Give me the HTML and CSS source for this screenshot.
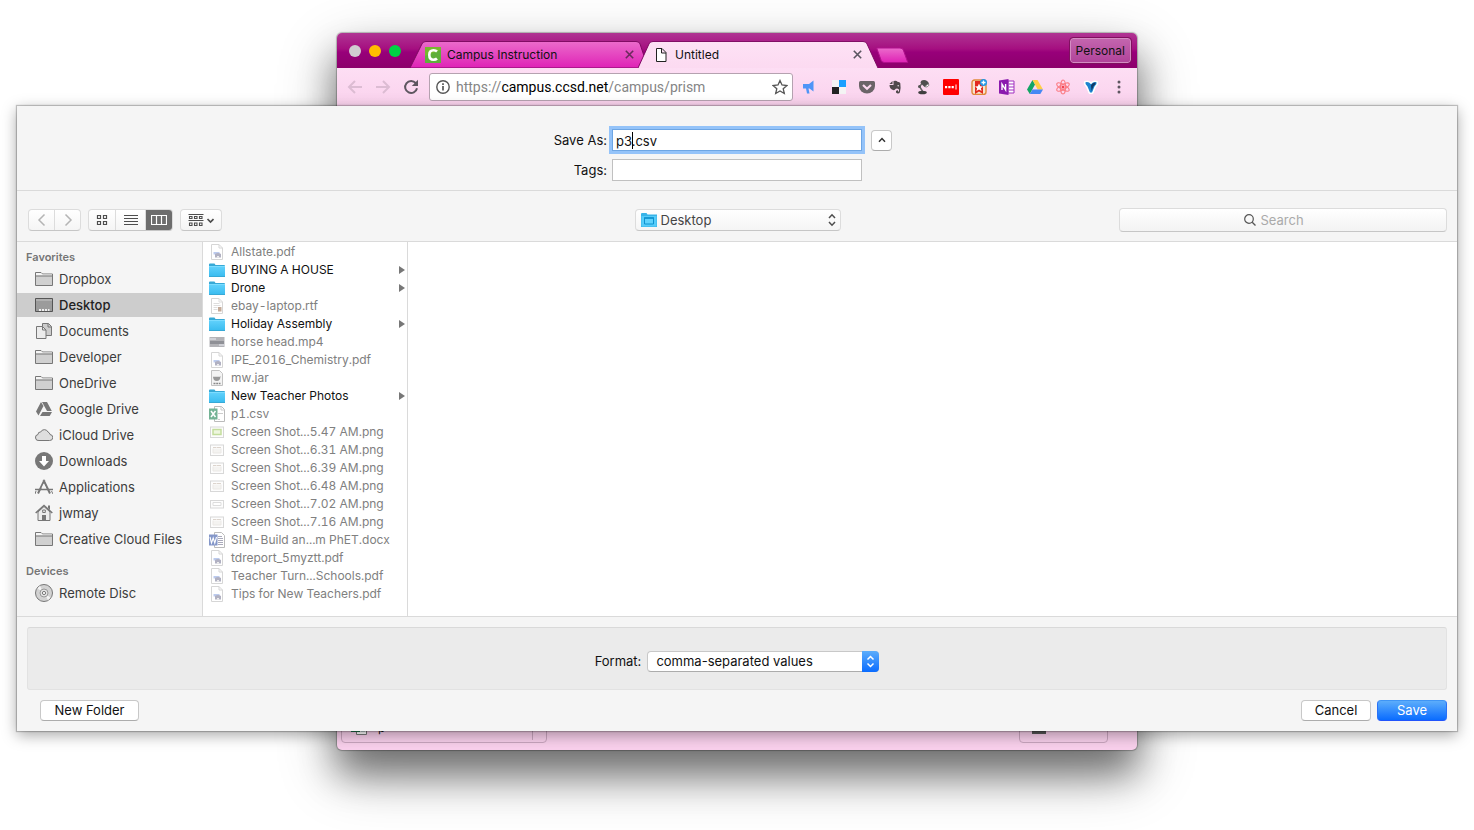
FILE: index.html
```
<!DOCTYPE html>
<html lang="en">
<head>
<meta charset="utf-8">
<title>Save As</title>
<link rel="stylesheet" href="styles.css">
</head>
<body>
<svg class="defs" aria-hidden="true">
  <linearGradient id="gFolder" x1="0" y1="0" x2="0" y2="1"><stop offset="0" stop-color="#5fd0fb"/><stop offset="1" stop-color="#3cbdf0"/></linearGradient>
  <linearGradient id="gTab" x1="0" y1="0" x2="0" y2="1"><stop offset="0" stop-color="#eb6bcb"/><stop offset="1" stop-color="#df22b6"/></linearGradient>
  <linearGradient id="gTabOn" x1="0" y1="0" x2="0" y2="1"><stop offset="0" stop-color="#fde2f5"/><stop offset="1" stop-color="#fcdaf1"/></linearGradient>
  <symbol id="side-folder" viewBox="0 0 18 16"><path d="M.5 14.500V1.500h5.500l1.500 1.500h10v11.500z" fill="#d0d0d0" stroke="#777"/><path d="M1 2h5l1.500 1.500H17V4.500H1z" fill="#f5f5f5"/><path d="M1 5h16" stroke="#777"/></symbol>
  <symbol id="folder" viewBox="0 0 16 14"><path d="M0 1.500Q0 .5 1 .5h4.500l1 1.500H15q1 0 1 1V14H0z" fill="#37a9d6"/><path d="M0 4h16v9H0z" fill="url(#gFolder)"/><path d="M0 3.500h16" stroke="#7cdcff"/></symbol>
  <symbol id="pdf" viewBox="0 0 16 16"><path d="M2.500.5h7.500l3.500 3.500v11.500h-11z" fill="#fff" stroke="#d6d6d6"/><path d="M10 .5V4h3.500" fill="none" stroke="#d6d6d6"/><path d="M4.500 8h6v2.500h-6z" fill="#bccbee"/><path d="M6 10q3-2 6 0v3.500H6z" fill="#b1b1c2"/><path d="M8 12h2v1.500H8z" fill="#eee"/></symbol>
  <symbol id="rtf" viewBox="0 0 16 16"><path d="M2.500.5h7.500l3.500 3.500v11.500h-11z" fill="#fff" stroke="#d6d6d6"/><path d="M10 .5V4h3.500M4.500 5.500h6M4.500 7.500h7M4.500 9.500h4M4.500 11.500h4" fill="none" stroke="#dedede"/><path d="M9 9h3.500v4.500H9z" fill="#c4ab99"/></symbol>
  <symbol id="png" viewBox="0 0 16 16"><rect x="1.500" y="3" width="13" height="10.500" fill="#fdfdfd" stroke="#d8d8d8"/><path d="M4 5.500h3.500M8 5.500h4" stroke="#dcd4cd"/><path d="M4 6.500v4.500h8V6.500" fill="#f4f3f1" stroke="#ebe8e5"/></symbol>
</svg>

<main class="desktop">
  <section class="browser" aria-label="Browser window">
    <header class="titlebar">
      <div class="lights"><i class="light grey"></i><i class="light amber"></i><i class="light green"></i></div>
      <div class="tabs">
        <div class="tab">
          <svg class="tab-shape" viewBox="0 0 238 28" preserveAspectRatio="none"><path d="M0 28L12 3Q13 .5 16 .5H226Q229 .5 230 3L238 28z" fill="url(#gTab)" stroke="#7d0a62"/></svg>
          <svg class="i16" viewBox="0 0 16 16"><rect width="16" height="16" fill="#76b82e"/><path d="M0 16V9L16 3v13z" fill="#5faf3c"/><path d="M12 4.500Q10.800 3.300 8.500 3.300 4.300 3.300 4.300 8t4.200 4.700Q10.800 12.700 12 11.500" fill="none" stroke="#fff" stroke-width="2.600"/></svg>
          <span class="tab-title">Campus Instruction</span>
          <button class="x" aria-label="Close Campus Instruction"><svg viewBox="0 0 9 9"><path d="M.8.8l7.400 7.400M8.200.8L.8 8.200" stroke="#6a2a5b" stroke-width="1.600"/></svg></button>
        </div>
        <div class="tab on">
          <svg class="tab-shape" viewBox="0 0 240 28" preserveAspectRatio="none"><path d="M0 28L11 3Q12 .5 15 .5H225Q228 .5 229 3L240 28" fill="url(#gTabOn)" stroke="#7d0a62"/></svg>
          <svg class="i16" viewBox="0 0 16 16"><path d="M3.500 1.500h5.500l4 4v9h-9.500zM8.500 1.500V6H13" fill="#fff" stroke="#222"/></svg>
          <span class="tab-title">Untitled</span>
          <button class="x" aria-label="Close Untitled"><svg viewBox="0 0 9 9"><path d="M.8.8l7.400 7.400M8.200.8L.8 8.200" stroke="#5a5560" stroke-width="1.600"/></svg></button>
        </div>
        <button class="newtab" aria-label="New tab"><svg viewBox="0 0 34 17"><path d="M.7 1H24q2.500 0 3.300 2l4.500 12.500H8.500q-2.500 0-3.300-2z" fill="url(#gTab)" stroke="#b0108c"/></svg></button>
      </div>
      <button class="profile">Personal</button>
    </header>
    <nav class="navbar">
      <div class="navbtns">
        <button class="ic" aria-label="Back"><svg viewBox="0 0 16 16"><path d="M15 8H2M8 2L2 8l6 6" fill="none" stroke="#dcbcd3" stroke-width="2"/></svg></button>
        <button class="ic" aria-label="Forward"><svg viewBox="0 0 16 16"><path d="M1 8h13M8 2l6 6-6 6" fill="none" stroke="#dcbcd3" stroke-width="2"/></svg></button>
        <button class="ic" aria-label="Reload"><svg viewBox="0 0 16 16"><path d="M12.800 4.200A6 6 0 1 0 14 9.200" fill="none" stroke="#5e5660" stroke-width="2"/><path d="M15 .8V7H8.800z" fill="#5e5660"/></svg></button>
      </div>
      <div class="omnibox">
        <svg class="i16" viewBox="0 0 16 16"><circle cx="8" cy="8" r="6.200" fill="none" stroke="#555" stroke-width="1.400"/><path d="M8 7v4.500M8 4.300v1.600" stroke="#555" stroke-width="1.700"/></svg>
        <a class="url" href="#">https://<b>campus.ccsd.net</b>/campus/prism</a>
        <svg class="i16" viewBox="0 0 16 16"><path d="M8 1.500l2 4.500 4.900.5-3.700 3.200 1.100 4.800L8 12l-4.300 2.500 1.100-4.800L1.100 6.500 6 6z" fill="none" stroke="#555" stroke-width="1.300"/></svg>
      </div>
      <div class="exts">
        <button aria-label="Announcements"><svg viewBox="0 0 16 16"><path d="M10.500 1.500v11L6.500 9.500H5.500l1 5H4L3 9.500H0V5h6z" fill="#4f95f7"/></svg></button>
        <button aria-label="Delicious"><svg viewBox="0 0 16 16"><rect x="1" y="1" width="14" height="14" fill="#f4f4f4"/><path d="M8 1h7v7H8z" fill="#1a9fff"/><path d="M1 8h7v7H1z" fill="#222"/></svg></button>
        <button aria-label="Pocket"><svg viewBox="0 0 16 16"><path d="M1.500 2h13q1.500 0 1.500 1.500V7a8 7.500 0 0 1-16 0V3.500Q0 2 1.500 2z" fill="#6b6468"/><path d="M4 6l4 3.800L12 6" fill="none" stroke="#fcd9f0" stroke-width="2.200"/></svg></button>
        <button aria-label="Evernote"><svg viewBox="0 0 16 16"><path d="M5.500 2v3H2.500zM6.500 2q3-1 4 .8 2.500 0 2.800 1.500.8 5-.4 9Q12.500 14.500 11 14.500q-2.500-.3-2-2.300.5-1 2-.8v1h1V10.500q-1.500-1-2-1Q8.500 9.500 8.500 10q-.5 1.500-2.500 1Q2.500 10 2.500 6h4z" fill="#4f484b"/><circle cx="11.200" cy="6.700" r=".8" fill="#ddd"/></svg></button>
        <button aria-label="Lamp"><svg viewBox="0 0 16 16"><path d="M8 3.500L4.500 7.500 8 13" fill="none" stroke="#666" stroke-width="1.500"/><path d="M5.500 4q0-3 3.500-3 3.500 0 5 3.500L9.500 8z" fill="#4f4f4f"/><path d="M9.800 7.500L13.500 4.500q1 2-.8 3-1.700 1-2.900 0z" fill="#fff" stroke="#666" stroke-width=".8"/><ellipse cx="7.500" cy="13.500" rx="4.300" ry="1.800" fill="#3f3f3f"/><circle cx="4.500" cy="7.500" r="1.500" fill="#555"/></svg></button>
        <button aria-label="Passwords"><svg viewBox="0 0 16 16"><rect width="16" height="16" rx="1" fill="#f00"/><path d="M2 7h2.200v2.200H2zM5.300 7h2.200v2.200H5.300zM8.600 7h2.200v2.200H8.600zM12.500 5.500h1v5h-1z" fill="#fff"/></svg></button>
        <button aria-label="Bookmarks"><svg viewBox="0 0 16 16"><rect x="1" y="1" width="14" height="14.500" rx="2.500" fill="#f7e3cd" stroke="#e08a3a" stroke-width="1.400"/><path d="M4 2h8v13l-4-2.500L4 15z" fill="#e3291e"/><path d="M8 4.500l1.200 2.700 2.800.2-2.200 1.900.8 2.800L8 10.500l-2.600 1.600.8-2.800L4 7.400l2.800-.2z" fill="#fff"/><circle cx="12.500" cy="3.500" r="3.500" fill="#2196e8"/><path d="M12.500 1.500v4M10.500 3.500h4" stroke="#fff" stroke-width="1.300"/></svg></button>
        <button aria-label="OneNote"><svg viewBox="0 0 16 16"><path d="M9 2h6v12H9z" fill="#fff" stroke="#a12fc0"/><path d="M10 5h5M10 8h5M10 11h5" stroke="#a12fc0"/><path d="M0 1.500L9.500 0v16L0 14.500z" fill="#8b1aae"/><path d="M3 11V5.200l3.600 5.600V5" fill="none" stroke="#fff" stroke-width="1.400"/></svg></button>
        <button aria-label="Google Drive"><svg viewBox="0 0 16 16"><path d="M5.500 1L0 10.500 2.800 15 8 5.500z" fill="#13a564"/><path d="M5.500 1h5L16 10.500h-5.300z" fill="#ffce43"/><path d="M5.500 10.500H16L13.300 15H2.800z" fill="#4688f4"/></svg></button>
        <button aria-label="Atom"><svg viewBox="0 0 16 16"><g fill="none" stroke="#fb7b83" stroke-width="1.100"><ellipse cx="8" cy="8" rx="2.500" ry="7"/><ellipse cx="8" cy="8" rx="2.500" ry="7" transform="rotate(60 8 8)"/><ellipse cx="8" cy="8" rx="2.500" ry="7" transform="rotate(120 8 8)"/></g><circle cx="8" cy="8" r="1.500" fill="#f4444f"/></svg></button>
        <button aria-label="Vector"><svg viewBox="0 0 16 16"><path d="M1.500 2.500q3.500-1.500 6.500 1 3-2.500 6.500-1 1.500 2.500-2 5.500L9.800 14.500H6.200L3.500 8Q0 5 1.500 2.500z" fill="#fff" stroke="#fff"/><path d="M2.500 3.200q3-1 5.500 2 2.500-3 5.500-2 .8 2-2 4.200L9 13.500H7L4.500 7.400Q1.700 5.200 2.500 3.200z" fill="#1c84cf"/><path d="M8 6.500q1.500-3 4.500-3 .5 1.500-1.800 3.500L8.500 12z" fill="#123a66"/></svg></button>
        <button aria-label="Menu"><svg viewBox="0 0 16 16"><circle cx="8" cy="3" r="1.500" fill="#5e5660"/><circle cx="8" cy="8" r="1.500" fill="#5e5660"/><circle cx="8" cy="13" r="1.500" fill="#5e5660"/></svg></button>
      </div>
    </nav>
    <div class="page"></div>
    <footer class="shelf">
      <div class="download"><svg class="i16" viewBox="0 0 16 16"><path d="M5.500.5h10v14h-10z" fill="#fff" stroke="#777"/><path d="M0 3h9v9H0z" fill="#1e7b52"/><path d="M10 8h4M10 11h4" stroke="#9bb"/></svg><span>p</span><i class="split"></i></div>
      <div class="showall"><i class="bar"></i></div>
    </footer>
  </section>

  <form class="dialog" aria-label="Save As">
    <div class="naming">
      <label for="name">Save As:</label>
      <div class="namebox"><input id="name" class="field focus" type="text" value="p3.csv"><i class="caret"></i></div>
      <button type="button" class="push collapse" aria-label="Collapse"><svg viewBox="0 0 8 6"><path d="M1 4.700L4 1.500l3 3.200" fill="none" stroke="#333" stroke-width="1.500"/></svg></button>
      <label for="tags">Tags:</label>
      <input id="tags" class="field" type="text">
    </div>

    <div class="toolbar">
      <div class="tools">
        <div class="seg history">
          <button type="button" aria-label="Back"><svg viewBox="0 0 16 16"><path d="M10.500 2.500L5 8l5.500 5.500" fill="none" stroke="#b4b4b4" stroke-width="1.500"/></svg></button>
          <button type="button" aria-label="Forward"><svg viewBox="0 0 16 16"><path d="M5.500 2.500L11 8l-5.500 5.500" fill="none" stroke="#b4b4b4" stroke-width="1.500"/></svg></button>
        </div>
        <div class="seg views">
          <button type="button" aria-label="Icons"><svg viewBox="0 0 16 16"><path d="M3.500 3.500h3v3h-3zM9.500 3.500h3v3h-3zM3.500 9.500h3v3h-3zM9.500 9.500h3v3h-3z" fill="none" stroke="#4d4d4d" stroke-width="1.200"/></svg></button>
          <button type="button" aria-label="List"><svg viewBox="0 0 16 16"><path d="M1 3.500h14M1 6.500h14M1 9.500h14M1 12.500h14" stroke="#4d4d4d"/></svg></button>
          <button type="button" class="active" aria-label="Columns"><svg viewBox="0 0 16 16"><path d="M.5 3.500h15v9H.5zM5.500 3v10M10.500 3v10" fill="none" stroke="#fff" stroke-width="1.200"/></svg></button>
        </div>
        <div class="seg arrange"><button type="button" aria-label="Arrange"><svg viewBox="0 0 26 16"><path d="M.5 2.500h15M.5 8.500h15" stroke="#4d4d4d"/><path d="M1.500 4.500h2.500v2H1.500zM6.500 4.500H9v2H6.500zM11.500 4.500H14v2h-2.500zM1.500 11H4v2.500H1.500zM6.500 11H9v2.500H6.500zM11.500 11H14v2.500h-2.500z" fill="none" stroke="#4d4d4d" stroke-width="1.100"/><path d="M19.500 7l3 3 3-3" fill="none" stroke="#4d4d4d" stroke-width="1.700"/></svg></button></div>
      </div>
      <div class="location">
        <svg class="i16" viewBox="0 0 16 14"><path d="M0 1q0-1 1-1h4.500l1 1.500H16V14H0z" fill="#38b4e8"/><path d="M.5 3h15v10.500H.5z" fill="#56ccf9"/><path d="M3.500 5h9v6h-9z" fill="#5fd2fc" stroke="#0e92cf"/><path d="M3 5h10" stroke="#0e92cf" stroke-width="1.500"/></svg>
        <select aria-label="Location"><option>Desktop</option></select>
        <svg class="updown" viewBox="0 0 8 14"><path d="M1 5l3-3.200L7 5M1 9l3 3.200L7 9" fill="none" stroke="#4d4d4d" stroke-width="1.500"/></svg>
      </div>
      <div class="search">
        <svg viewBox="0 0 12 12"><circle cx="5" cy="5" r="4.300" fill="none" stroke="#555" stroke-width="1.200"/><path d="M8.200 8.200l3.300 3.300" stroke="#555" stroke-width="1.300"/></svg>
        <input type="search" placeholder="Search" aria-label="Search">
      </div>
    </div>

    <div class="panes">
      <nav class="sidebar">
        <h2>Favorites</h2>
        <a href="#"><svg><use href="#side-folder"/></svg>Dropbox</a>
        <a href="#" class="current"><svg viewBox="0 0 18 16"><path d="M.5 1.500h17v13H.5z" fill="#9b9b9b" stroke="#555"/><path d="M1 3h16" stroke="#c5c5c5"/><path d="M4 12h2v2H4zM7 12h2v2H7zM10 12h2v2h-2zM13 12h1.500v2H13z" fill="#eee"/></svg>Desktop</a>
        <a href="#"><svg viewBox="0 0 18 18"><path d="M7.500 1.500h6l3 3v9h-9z" fill="#ccc" stroke="#777"/><path d="M13 1.500V5h3.500" fill="none" stroke="#777"/><path d="M1.500 4.500h6l3.500 3.500v8.500H1.500z" fill="#ececec" stroke="#777"/><path d="M7.500 4.500V8H11" fill="none" stroke="#777"/></svg>Documents</a>
        <a href="#"><svg><use href="#side-folder"/></svg>Developer</a>
        <a href="#"><svg><use href="#side-folder"/></svg>OneDrive</a>
        <a href="#"><svg viewBox="0 0 18 16"><path d="M6 1L1 10.500 3.500 14.500 8.500 5zM7 1h5l4.800 9H12zM7.500 11H17l-2.300 4H5z" fill="#777"/></svg>Google Drive</a>
        <a href="#"><svg viewBox="0 0 18 16"><path d="M4 13.500h10.500a3 3 0 0 0 .5-6 3.200 3.200 0 0 0-2-2.500 4 4 0 0 0-7.300 0 2.500 2.500 0 0 0-2.700 2.500A3 3 0 0 0 4 13.500z" fill="#dedede" stroke="#777"/></svg>iCloud Drive</a>
        <a href="#"><svg viewBox="0 0 18 18"><circle cx="9" cy="9" r="9" fill="#777"/><path d="M7 4h4v5h3l-5 5.500L4 9h3z" fill="#fff"/></svg>Downloads</a>
        <a href="#"><svg viewBox="0 0 18 16"><path d="M9.500 1L3 14.500M8.500 1L15 14.500" stroke="#777" stroke-width="2"/><path d="M0 10.500h18" stroke="#777" stroke-width="1.500"/><path d="M1 12l-1 3M16.500 12l1.500 3" stroke="#777"/><path d="M8.600 4.500L6.500 9h4.500z" fill="#f5f5f5"/></svg>Applications</a>
        <a href="#"><svg viewBox="0 0 18 18"><path d="M3 8l6-5.500L15 8v8.500H3z" fill="#ececec" stroke="#777"/><path d="M.7 9L9 1.500 17.300 9" fill="none" stroke="#777" stroke-width="1.600"/><path d="M13 1.500h2V6l-2-2z" fill="#777"/><path d="M7 11h4v6H7z" fill="#777"/><path d="M7.700 6h2.600v2.500H7.700z" fill="none" stroke="#777"/></svg>jwmay</a>
        <a href="#"><svg><use href="#side-folder"/></svg>Creative Cloud Files</a>
        <h2 class="later">Devices</h2>
        <a href="#"><svg viewBox="0 0 18 18"><circle cx="9" cy="9" r="8.500" fill="#d2d2d2" stroke="#777"/><path d="M9 9L2.500 4.500A8 8 0 0 1 5 2zM9 9l6.500 4.500A8 8 0 0 1 13 16z" fill="#f3f3f3"/><circle cx="9" cy="9" r="4" fill="#e3e3e3" stroke="#999"/><circle cx="9" cy="9" r="1.600" fill="#fff" stroke="#777"/></svg>Remote Disc</a>
      </nav>
      <ul class="files">
        <li><svg><use href="#pdf"/></svg>Allstate.pdf</li>
        <li class="dir"><svg><use href="#folder"/></svg>BUYING A HOUSE</li>
        <li class="dir"><svg><use href="#folder"/></svg>Drone</li>
        <li><svg><use href="#rtf"/></svg>ebay-laptop.rtf</li>
        <li class="dir"><svg><use href="#folder"/></svg>Holiday Assembly</li>
        <li><svg viewBox="0 0 16 16"><path d="M.5 3h15v10H.5z" fill="#b3b3b7"/><path d="M1 7h14v3H1z" fill="#8f9096"/><path d="M1 4h6v2H1zM10 10h5v2h-5z" fill="#cfd0d6"/></svg>horse head.mp4</li>
        <li><svg><use href="#pdf"/></svg>IPE_2016_Chemistry.pdf</li>
        <li><svg viewBox="0 0 16 16"><path d="M2.500.5h8l3 3v12h-11z" fill="#f4f4f4" stroke="#c2c2c2"/><path d="M4 6h7.500q0 5-3.800 5T4 6z" fill="#999"/><path d="M4 6.500h7.500" stroke="#ddd"/><path d="M4.500 13.500h7" stroke="#888" stroke-width="1.500" stroke-dasharray="2 .7"/></svg>mw.jar</li>
        <li class="dir"><svg><use href="#folder"/></svg>New Teacher Photos</li>
        <li><svg viewBox="0 0 16 16"><path d="M5.500.5h7l3 3v12h-10z" fill="#fff" stroke="#bbb"/><path d="M12 .5V4h3.500M9 7.500h5M9 13.500h2" fill="none" stroke="#ccc"/><path d="M0 2.500h8.500v11H0z" fill="#74b395"/><path d="M2 5l4.500 6M6.500 5L2 11" stroke="#fff" stroke-width="1.500"/></svg>p1.csv</li>
        <li><svg viewBox="0 0 16 16"><rect x="1.500" y="3" width="13" height="10.500" fill="#fdfdfd" stroke="#d8d8d8"/><path d="M4 5.500h8v5H4z" fill="#eef6df" stroke="#c3dd9d" stroke-width="1.500"/></svg>Screen Shot...5.47 AM.png</li>
        <li><svg><use href="#png"/></svg>Screen Shot...6.31 AM.png</li>
        <li><svg><use href="#png"/></svg>Screen Shot...6.39 AM.png</li>
        <li><svg><use href="#png"/></svg>Screen Shot...6.48 AM.png</li>
        <li><svg viewBox="0 0 16 16"><rect x="1.500" y="4.500" width="13" height="7.500" fill="#fdfdfd" stroke="#d8d8d8"/><path d="M4 6.500h8v3H4z" fill="#fff" stroke="#ddd"/></svg>Screen Shot...7.02 AM.png</li>
        <li><svg><use href="#png"/></svg>Screen Shot...7.16 AM.png</li>
        <li><svg viewBox="0 0 16 16"><path d="M5.500.5h7l3 3v12h-10z" fill="#fff" stroke="#bbb"/><path d="M9 4.500h4M9 6.500h5M9 8.500h5M9 10.500h5M9 12.500h5" stroke="#aab"/><path d="M0 2.500h8.500v11H0z" fill="#8497c9"/><path d="M1 5l1.500 6L4.200 6l1.600 5L7.500 5" fill="none" stroke="#fff" stroke-width="1.100"/></svg>SIM-Build an...m PhET.docx</li>
        <li><svg><use href="#pdf"/></svg>tdreport_5myztt.pdf</li>
        <li><svg><use href="#pdf"/></svg>Teacher Turn...Schools.pdf</li>
        <li><svg><use href="#pdf"/></svg>Tips for New Teachers.pdf</li>
      </ul>
      <div class="preview"></div>
    </div>

    <div class="accessory">
      <label for="format">Format:</label>
      <div class="format">
        <select id="format"><option>comma-separated values</option></select>
        <svg class="cap" viewBox="0 0 17 21"><path d="M5.500 8.500l3-3 3 3M5.500 12.500l3 3 3-3" fill="none" stroke="#fff" stroke-width="1.500"/></svg>
      </div>
    </div>
    <div class="actions">
      <button type="button" class="push newfolder">New Folder</button>
      <button type="button" class="push wide">Cancel</button>
      <button type="submit" class="push wide primary">Save</button>
    </div>
  </form>
</main>
</body>
</html>
```
FILE: styles.css
```
* { box-sizing: border-box; }
body {
  margin: 0;
  background: #fff;
  font: 13px/16px Inter, "Liberation Sans", sans-serif;
  color: #111;
}
button, input, select { font: inherit; color: inherit; margin: 0; padding: 0; border: 0; background: none; appearance: none; }
svg { display: block; flex: none; }
.defs { position: absolute; width: 0; height: 0; }
.i16 { width: 16px; height: 16px; }

.desktop {
  display: grid;
  min-height: 100vh;
  align-content: start;
  padding: 33px 17px 80px;
  overflow: hidden;
}
.browser, .dialog { grid-area: 1 / 1; }

/* browser window */
.browser {
  justify-self: center;
  width: 100%;
  max-width: 800px;
  display: flex;
  flex-direction: column;
  border-radius: 5px;
  background: #f9d0ec;
  box-shadow: 0 0 1px 1px rgba(0,0,0,.25), 0 24px 36px rgba(0,0,0,.42), 0 22px 60px rgba(0,0,0,.3);
}
.titlebar {
  display: flex;
  height: 35px;
  border-radius: 5px 5px 0 0;
  background: linear-gradient(#b03593, #a50f80 45%, #98007a 55%, #8c006b);
}
.lights { display: flex; gap: 8px; padding: 12px 0 0 12px; width: 73px; }
.light { width: 12px; height: 12px; border-radius: 50%; }
.grey { background: #d0cdd0; }
.amber { background: #ffbd00; }
.green { background: #00d444; }
.tabs { display: flex; flex: 1; padding-top: 8px; }
.tab {
  position: relative;
  display: flex;
  align-items: center;
  width: 238px;
  padding: 0 14px 0 15px;
}
.tab.on { width: 240px; margin-left: -10px; padding: 0 16px 0 15px; }
.tab-shape { position: absolute; inset: 0; width: 100%; height: 100%; }
.tab > :not(.tab-shape) { position: relative; }
.tab-title { flex: 1; margin-left: 6px; font-size: 12px; }
.x { width: 9px; height: 9px; }
.newtab { width: 34px; height: 17px; margin: 6px 0 0 -2px; }
.profile {
  align-self: center;
  height: 25px;
  margin-right: 6px;
  padding: 0 5px;
  border: 1px solid #d48cc3;
  border-radius: 3px;
  outline: 1px solid #80105f;
  background: linear-gradient(#c365ae, #b1449a);
  font-size: 12px;
}
.navbar {
  display: flex;
  align-items: center;
  height: 38px;
  padding: 0 4px 0 10px;
  background: linear-gradient(#fddef4, #fad2ed);
}
.navbtns { display: flex; gap: 12px; width: 82px; }
.ic { width: 16px; height: 16px; }
.omnibox {
  display: flex;
  align-items: center;
  flex: 1;
  height: 28px;
  margin-right: 4px;
  padding: 0 4px 0 5px;
  border: 1px solid #b5a2b0;
  border-radius: 3px;
  background: #fff;
}
.url { flex: 1; margin-left: 5px; font: 14px/16px Roboto, "Liberation Sans", sans-serif; color: #858585; text-decoration: none; }
.url b { font-weight: 400; color: #000; }
.exts { display: flex; }
.exts button { width: 28px; height: 16px; padding: 0 6px; }
.exts svg { width: 16px; height: 16px; }
.page { flex: 1; }
.shelf {
  display: flex;
  justify-content: space-between;
  padding: 0 29px 7px 4px;
}
.download, .showall {
  display: flex;
  align-items: center;
  height: 28px;
  border: 1px solid #caa5bf;
  border-radius: 4px;
}
.download { width: 206px; padding: 0 0 2px 9px; gap: 11px; font-size: 12px; }
.split { align-self: stretch; margin-left: auto; margin-right: 13px; border-left: 1px solid #caa5bf; }
.showall { width: 89px; padding-left: 12px; align-items: end; }
.bar { width: 14px; height: 3px; margin-bottom: 8px; background: #555; }

/* save dialog */
.dialog {
  position: relative;
  display: flex;
  flex-direction: column;
  margin: 73px 0 19px;
  background: #f5f5f5;
  box-shadow: 0 0 1px 1px rgba(0,0,0,.22), 0 4px 14px rgba(0,0,0,.35);
}
.naming {
  display: grid;
  grid-template-columns: 1fr 250px 1fr;
  align-items: center;
  row-gap: 8px;
  padding: 23px 0 9px;
  border-bottom: 1px solid #dadada;
}
.naming label { justify-self: end; padding-right: 5px; }
.namebox { position: relative; }
.field { display: block; width: 100%; height: 22px; padding: 1px 3px 0; border: 1px solid #c0c0c0; background: #fff; }
.focus { border-color: #6ea6e4; outline: 3px solid #94c3f9; }
.caret { position: absolute; left: 20px; top: 3px; width: 1px; height: 17px; background: #000; }
.push {
  height: 21px;
  border: 1px solid #c8c8c8;
  border-bottom-color: #acacac;
  border-radius: 4px;
  background: #fff;
}
.collapse { width: 21px; margin-left: 9px; display: grid; place-items: center; }
.collapse svg { width: 8px; height: 6px; }

.toolbar {
  display: grid;
  grid-template-columns: 1fr 206px 1fr;
  align-items: center;
  padding: 17px 10px 9px 11px;
  border-bottom: 1px solid #dadada;
}
.tools { display: flex; gap: 7px; }
.seg {
  display: flex;
  height: 22px;
  border: 1px solid #dcdcdc;
  border-bottom-color: #c6c6c6;
  border-radius: 4px;
  background: linear-gradient(#fff, #f5f5f5);
  overflow: hidden;
}
.seg button { width: 26px; display: grid; place-items: center; border-left: 1px solid #dcdcdc; }
.seg button:first-child { border-left: 0; }
.seg svg { width: 16px; height: 16px; }
.history button:first-child { width: 25px; }
.views button + button { width: 30px; }
.views button.active { background: #6d6d6d; width: 27px; }
.seg.arrange button { width: 40px; }
.arrange svg { width: 26px; }
.location {
  display: flex;
  align-items: center;
  height: 22px;
  padding: 0 4px 0 5px;
  border: 1px solid #dcdcdc;
  border-bottom-color: #c6c6c6;
  border-radius: 4px;
  background: linear-gradient(#fff, #f5f5f5);
}
.location select { flex: 1; margin-left: 4px; color: #444; }
.updown { width: 8px; height: 14px; }
.search {
  justify-self: end;
  display: flex;
  align-items: center;
  justify-content: center;
  gap: 5px;
  width: 328px;
  height: 24px;
  border: 1px solid #dcdcdc;
  border-bottom-color: #c6c6c6;
  border-radius: 4px;
  background: linear-gradient(#fff, #f3f3f3);
}
.search svg { width: 12px; height: 12px; }
.search input { width: 62px; }
.search input::placeholder { color: #aaa; opacity: 1; }

.panes { display: flex; border-bottom: 1px solid #dadada; }
.sidebar {
  display: flex;
  flex-direction: column;
  gap: 2px;
  width: 186px;
  padding: 7px 0 11px;
  border-right: 1px solid #dadada;
}
.sidebar h2 { margin: 0; padding-left: 9px; font-size: 11px; line-height: 16px; font-weight: 600; color: #757575; }
.sidebar .later { margin-top: 10px; }
.sidebar a {
  display: flex;
  align-items: center;
  gap: 6px;
  height: 24px;
  padding-left: 18px;
  color: #3c3c3c;
  text-decoration: none;
}
.sidebar svg { width: 18px; height: 18px; }
.sidebar .current { background: #cdcdcd; color: #222; font-weight: 500; }
.files {
  width: 205px;
  margin: 0;
  padding: 1px 0 0;
  list-style: none;
  border-right: 1px solid #dadada;
  background: #fff;
  color: #808080;
  font-size: 12px;
  font-variant-numeric: tabular-nums;
}
.files li { display: flex; align-items: center; gap: 6px; height: 18px; padding: 0 2px 0 6px; }
.files svg { width: 16px; height: 16px; }
.files .dir { color: #111; }
.files .dir::after {
  content: "";
  margin-left: auto;
  border: solid transparent;
  border-width: 4px 0 4px 6px;
  border-left-color: #777;
}
.preview { flex: 1; background: #fff; }

.accessory {
  display: flex;
  align-items: center;
  justify-content: center;
  gap: 6px;
  height: 63px;
  margin: 10px 10px 0;
  padding-top: 5px;
  border: 1px solid #e2e2e2;
  border-top-color: #d9d9d9;
  border-radius: 3px;
  background: #ebebeb;
}
.format { position: relative; }
.format select {
  display: block;
  width: 232px;
  height: 21px;
  padding: 0 20px 0 8px;
  border: 1px solid #c8c8c8;
  border-bottom-color: #acacac;
  border-radius: 4px;
  background: #fff;
}
.cap {
  position: absolute;
  top: 0;
  right: 0;
  width: 17px;
  height: 21px;
  border-radius: 0 4px 4px 0;
  background: linear-gradient(#5cadfb, #0a6cff);
}
.actions { display: flex; gap: 6px; padding: 10px 10px 10px 23px; }
.actions .push { padding-bottom: 1px; }
.newfolder { width: 99px; margin-right: auto; }
.wide { width: 70px; }
.primary {
  border-color: #3f95f5 #2a72f8 #2254fb;
  background: linear-gradient(#5cadfb, #0a6cff);
  color: #fff;
}
```
